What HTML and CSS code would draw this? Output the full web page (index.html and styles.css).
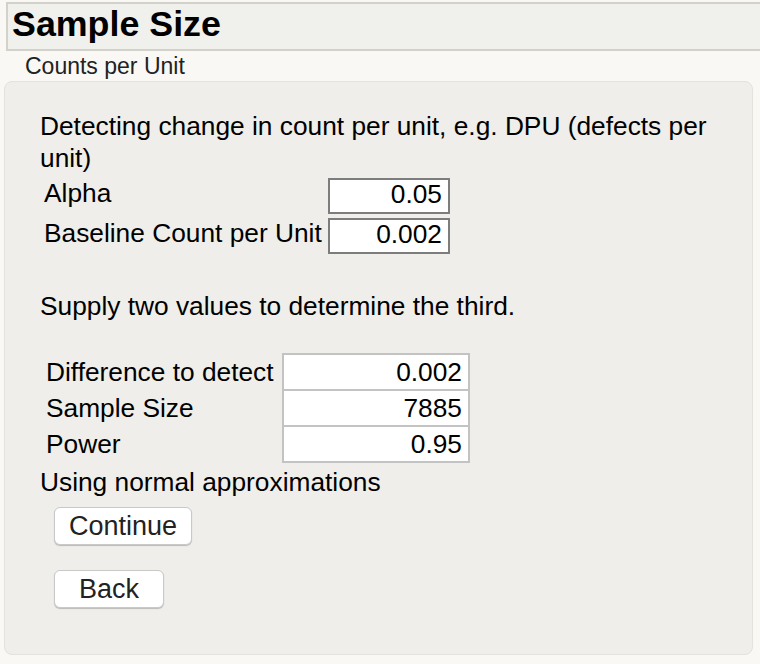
FILE: index.html
```
<!DOCTYPE html>
<html>
<head>
<meta charset="utf-8">
<title>Sample Size</title>
<link rel="stylesheet" href="styles.css">
</head>
<body>
<div class="header"><h1 class="title">Sample Size</h1></div>
<div class="subtitle">Counts per Unit</div>
<div class="panel">
  <p class="intro">Detecting change in count per unit, e.g. DPU (defects per unit)</p>
  <div class="params">
    <div class="plabel">Alpha</div>
    <div class="pbox">0.05</div>
    <div class="plabel">Baseline Count per Unit</div>
    <div class="pbox">0.002</div>
  </div>
  <p class="note">Supply two values to determine the third.</p>
  <table class="calc">
    <tr><td class="clabel">Difference to detect</td><td class="cval">0.002</td></tr>
    <tr><td class="clabel">Sample Size</td><td class="cval">7885</td></tr>
    <tr><td class="clabel">Power</td><td class="cval">0.95</td></tr>
  </table>
  <p class="approx">Using normal approximations</p>
  <button class="btn btn-continue">Continue</button>
  <button class="btn btn-back">Back</button>
</div>
</body>
</html>
```
FILE: styles.css
```
html, body {
  margin: 0;
  padding: 0;
}
body {
  background: #f9f8f4;
  font-family: "Liberation Sans", Arial, sans-serif;
  color: #000;
  overflow: hidden;
  width: 760px;
  height: 664px;
}
.header {
  margin: 2px -20px 0 6px;
  height: 45px;
  border: 2px solid #d2d1ca;
  background: #f0f0ec;
  padding-left: 4px;
}
.title {
  margin: 0;
  font-size: 35.8px;
  font-weight: bold;
  line-height: 40px;
  color: #000;
}
.subtitle {
  margin: 2px 0 0 25px;
  font-size: 23px;
  line-height: 26px;
  color: #222;
}
.panel {
  margin: 2px 0 0 4px;
  width: 712px;
  height: 544px;
  background: #efeeea;
  border: 1px solid #e3e2dd;
  border-radius: 8px;
  padding: 28px 0 0 35px;
  box-sizing: content-box;
}
.panel p {
  margin: 0;
  font-size: 26.3px;
  line-height: 32px;
}
.intro {
  width: 680px;
}
.params {
  display: grid;
  grid-template-columns: 284px 122px;
  row-gap: 4px;
  margin: 4px 0 0 4px;
}
.plabel {
  font-size: 26.3px;
  line-height: 30px;
  height: 36px;
}
.pbox {
  height: 36px;
  box-sizing: border-box;
  border: 2px solid #7d7d7d;
  background: #fff;
  font-size: 26.3px;
  line-height: 28px;
  text-align: right;
  padding: 0 6px;
}
.panel .note {
  margin-top: 36px;
}
.calc {
  margin: 31px 0 0 6px;
  border-collapse: collapse;
  font-size: 26.3px;
}
.calc td {
  padding: 0;
  line-height: 34px;
  height: 34px;
}
.clabel {
  width: 236px;
}
.cval {
  width: 172px;
  border: 2px solid #c3c3c3;
  background: #fff;
  text-align: right;
  padding: 0 6px !important;
}
.panel .approx {
  margin-top: 3px;
}
.btn {
  display: block;
  margin-left: 14px;
  height: 38px;
  border: 1px solid #c9c9c9;
  border-radius: 6px;
  background: #fff;
  box-shadow: 0 1px 1px rgba(0, 0, 0, 0.22);
  font-family: "Liberation Sans", Arial, sans-serif;
  font-size: 27px;
  line-height: 36px;
  color: #222;
}
.btn-continue {
  margin-top: 9px;
  width: 138px;
  padding: 0;
}
.btn-back {
  margin-top: 25px;
  width: 110px;
  padding: 0;
}
```
